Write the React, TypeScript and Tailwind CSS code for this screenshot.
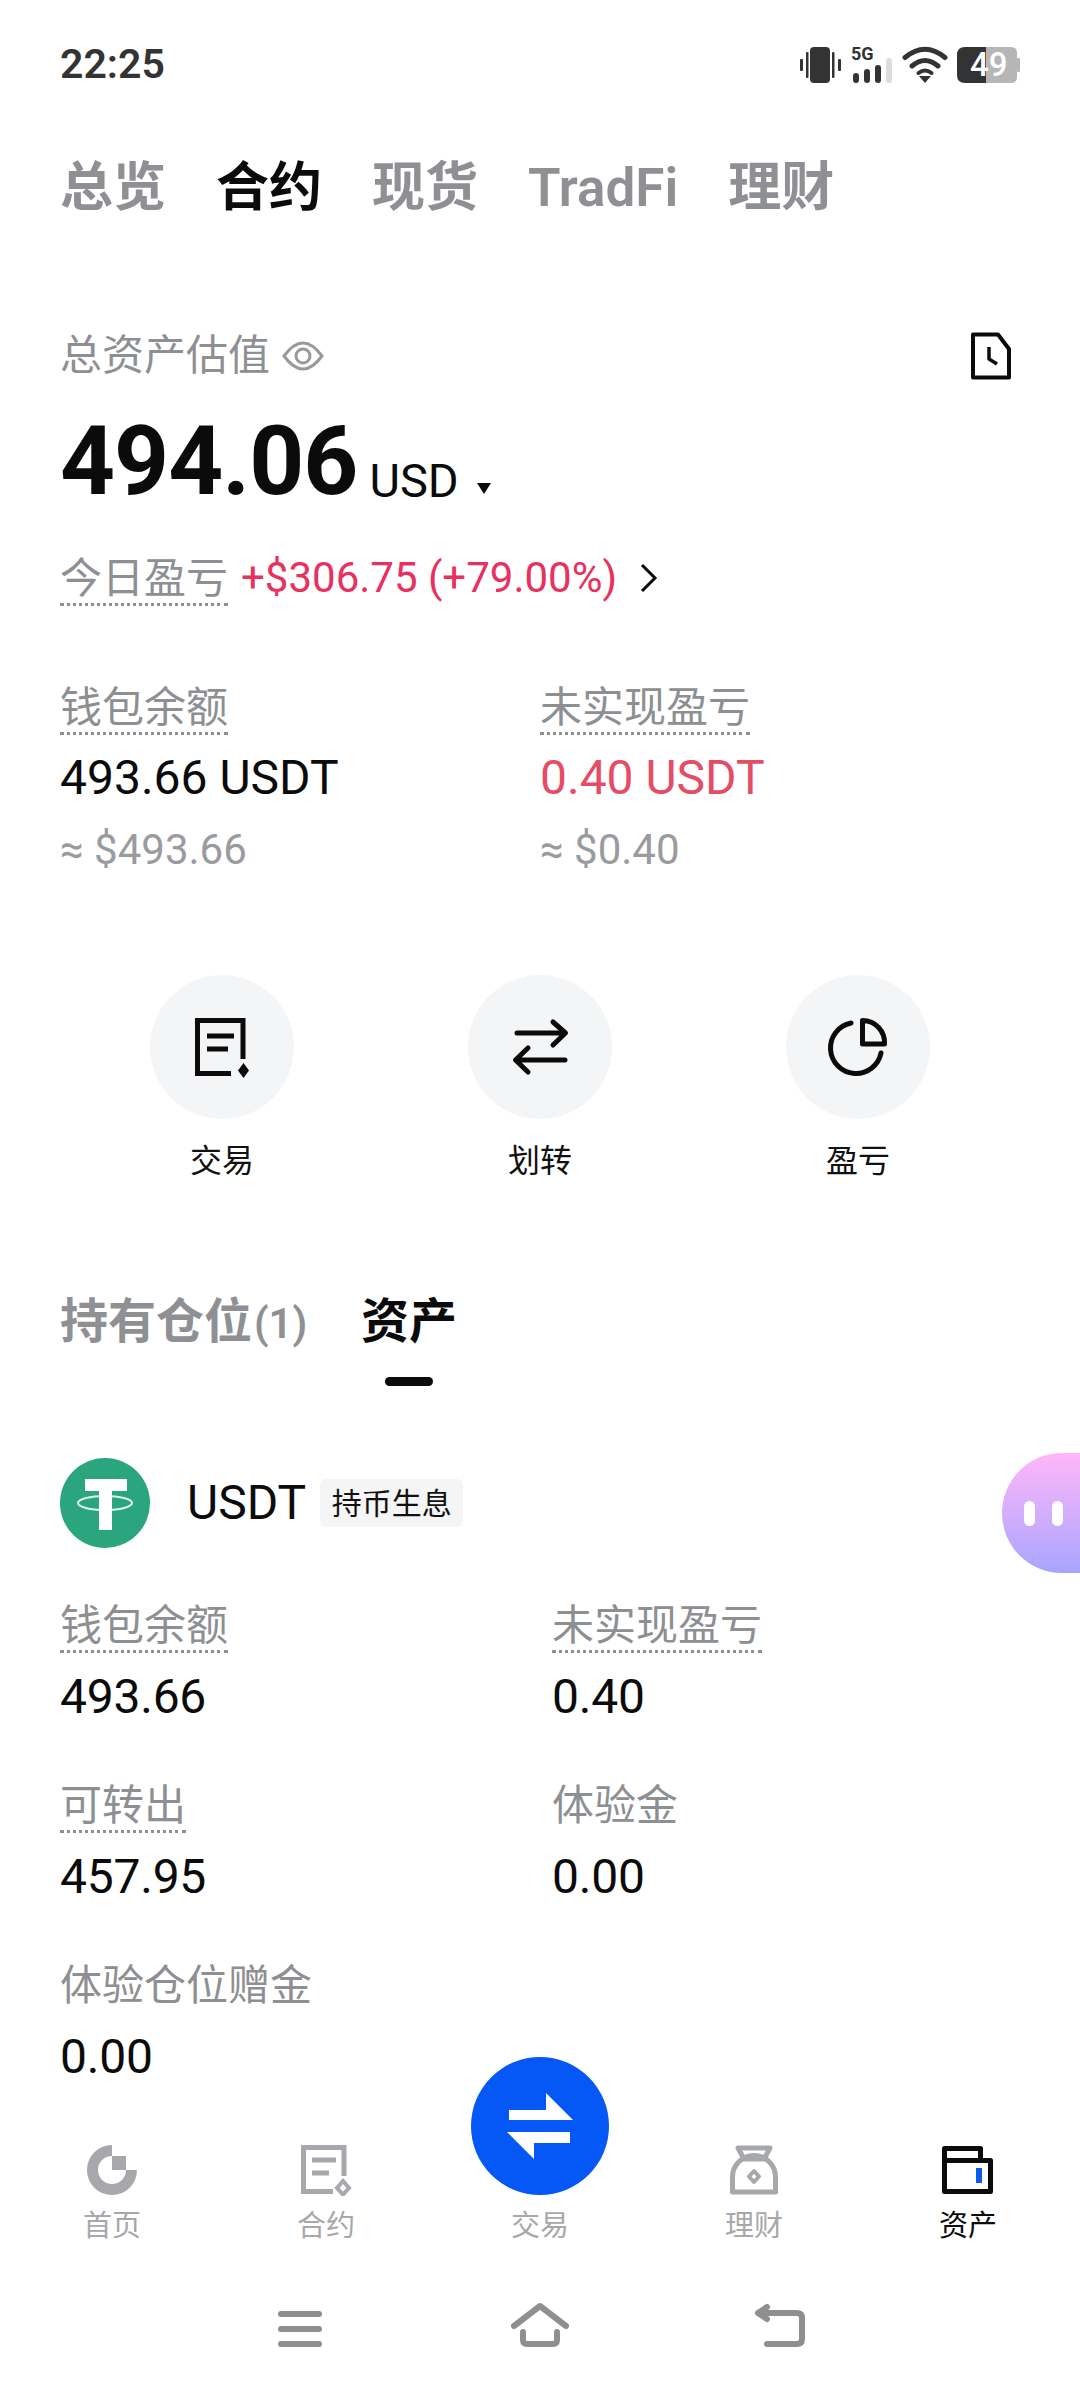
import React from 'react';

const FONT = "font-['Roboto','Noto_Sans_CJK_SC',sans-serif]";

const StatusIcons = () => (
  <svg width="230" height="50" viewBox="795 40 230 50" fill="none">
    <rect x="810" y="47" width="20" height="36" rx="4" fill="#333" />
    <rect x="800" y="59" width="3" height="12" rx="1" fill="#333" />
    <rect x="806" y="52" width="2.5" height="26" rx="1" fill="#333" />
    <rect x="832" y="52" width="2.5" height="26" rx="1" fill="#333" />
    <rect x="838" y="59" width="3" height="12" rx="1" fill="#333" />
    <text x="851" y="60" fontSize="18" fontWeight="700" fill="#333" fontFamily="Roboto">5G</text>
    <rect x="853" y="73" width="6" height="10" rx="3" fill="#333" />
    <rect x="864" y="69" width="6" height="14" rx="3" fill="#333" />
    <rect x="875" y="65" width="6" height="18" rx="3" fill="#333" />
    <rect x="886" y="58" width="6" height="25" rx="3" fill="#ddd" />
    <path d="M905 57.5Q925 41 945 57.5M912 66Q925 55 938 66" stroke="#333" strokeWidth="5" strokeLinecap="round" />
    <path d="M918.5 73Q925 68 931.5 73" stroke="#333" strokeWidth="4" strokeLinecap="round" />
    <path d="M919 76H931L925 83Z" fill="#333" />
    <path d="M986 47H1011Q1017 47 1017 53V77Q1017 83 1011 83H986Z" fill="#b6b6b6" />
    <rect x="1017" y="58" width="3" height="14" rx="1" fill="#b6b6b6" />
    <path d="M986 47H965Q957 47 957 55V75Q957 83 965 83H986Z" fill="#333" />
    <text x="970" y="76" fontSize="33" fontWeight="500" fill="#fff" fontFamily="Roboto">49</text>
  </svg>
);

const Label = ({ children }: { children: React.ReactNode }) => (
  <span className="inline-block h-[53px] border-b-[3px] border-dotted border-[#8d8f92] text-[42px] leading-[51px] text-[#8d8f92]">
    {children}
  </span>
);

const ActionIcon = ({ kind }: { kind: string }) => {
  if (kind === 'trade') {
    return (
      <svg width="60" height="66" viewBox="192 1014 60 66" fill="none" stroke="#0b0b0b" strokeWidth="5">
        <path d="M231 1073.5H197.5V1020.5H243V1059" />
        <path d="M207 1036H234M207 1049H228" />
        <path d="M243.5 1063L249 1070.5L243.5 1078L238 1070.5Z" fill="#0b0b0b" stroke="none" />
      </svg>
    );
  }
  if (kind === 'transfer') {
    return (
      <svg width="60" height="60" viewBox="510 1017 60 60" fill="none" stroke="#0b0b0b" strokeWidth="5" strokeLinecap="round" strokeLinejoin="round">
        <path d="M517 1033H565M553 1022L565.5 1033L553 1045" />
        <path d="M565 1060H517M528 1048L515.5 1060L528 1072" />
      </svg>
    );
  }
  return (
    <svg width="62" height="62" viewBox="827 1016 62 62" fill="none" stroke="#0b0b0b" strokeWidth="5" strokeLinecap="round">
      <path d="M851 1023A25.5 25.5 0 1 0 881 1053" />
      <path d="M862.5 1020.5A22 22 0 0 1 884.5 1044H862.5Z" strokeLinejoin="round" />
    </svg>
  );
};

const Stat = ({ label, value, plain }: { label: string; value: string; plain?: boolean }) => (
  <div className="flex h-[125px] flex-col items-start">
    {plain ? <span className="text-[42px] leading-[51px] text-[#8d8f92]">{label}</span> : <Label>{label}</Label>}
    <span className={`text-[48px] leading-[56px] tracking-[-0.005em] text-[#0b0b0b] ${plain ? 'mt-[18px]' : 'mt-[16px]'}`}>{value}</span>
  </div>
);

const navItems = [
  {
    label: '首页',
    icon: (
      <svg width="52" height="52" viewBox="86 2142 52 52" fill="none">
        <path d="M112 2148.5A19.5 19.5 0 1 0 131.5 2168" stroke="#a6a8ab" strokeWidth="11" />
        <rect x="112" y="2154" width="14" height="14" fill="#a6a8ab" />
      </svg>
    ),
  },
  {
    label: '合约',
    icon: (
      <svg width="52" height="52" viewBox="299 2142 52 52" fill="none" stroke="#a6a8ab" strokeWidth="5">
        <path d="M332 2189.5H302.5V2145.5H343V2174" />
        <path d="M311 2158H335M311 2171H328" />
        <path d="M342 2179L348 2186L342 2192.5L336 2186Z" strokeWidth="4" />
      </svg>
    ),
  },
  { label: '交易', icon: null },
  {
    label: '理财',
    icon: (
      <svg width="52" height="52" viewBox="727 2142 52 52" fill="none" stroke="#a6a8ab" strokeWidth="5" strokeLinejoin="round">
        <path d="M737 2146H769L763 2157H743Z" />
        <path d="M731.5 2190V2175A21.5 21.5 0 0 1 774.5 2175V2190Z" />
        <path d="M753 2169L758 2174.5L753 2180L748 2174.5Z" strokeWidth="4" />
      </svg>
    ),
  },
  {
    label: '资产',
    active: true,
    icon: (
      <svg width="54" height="52" viewBox="940 2142 54 52" fill="none" stroke="#0b0b0b" strokeWidth="5" strokeLinejoin="round">
        <path d="M943.5 2158.5H989.5V2189.5H943.5V2146.5H979.5V2158.5" />
        <rect x="975" y="2166" width="6" height="15" fill="#0b5ce6" stroke="none" />
      </svg>
    ),
  },
];

const App = () => {
  return (
    <div className={`relative flex h-[2392px] w-[1080px] flex-col overflow-hidden bg-white ${FONT}`}>
      {/* status bar */}
      <div className="flex h-[154px] items-start justify-between pl-[60px] pr-[55px] pt-[40px]">
        <span className="text-[41px] font-semibold leading-[48px] text-[#333]">22:25</span>
        <StatusIcons />
      </div>

      {/* top tabs */}
      <div className="mt-[2px] flex h-[64px] items-center gap-[50px] px-[60px] text-[53px] font-bold leading-[64px] text-[#8e9093]">
        <span>总览</span>
        <span className="text-[#0b0b0b]">合约</span>
        <span>现货</span>
        <span className="font-semibold">TradFi</span>
        <span>理财</span>
      </div>

      {/* total */}
      <div className="mt-[112px] flex h-[48px] items-center justify-between pl-[60px] pr-[68px]">
        <div className="flex items-center gap-[12px]">
          <span className="text-[42px] leading-[48px] text-[#8d8f92]">总资产估值</span>
          <svg width="42" height="34" viewBox="0 0 42 34" fill="none" stroke="#98999c" strokeWidth="3">
            <path d="M2 17Q21 -9 40 17Q21 43 2 17Z" />
            <circle cx="21" cy="17" r="7" />
          </svg>
        </div>
        <svg width="42" height="48" viewBox="0 0 42 48" fill="none" stroke="#0b0b0b" strokeWidth="4" strokeLinejoin="round">
          <path d="M3 2.5H28L39 17V45.5H3Z" />
          <path d="M19 15V27L27 32" strokeWidth="3.5" />
        </svg>
      </div>

      <div className="mt-[26px] flex h-[110px] items-baseline px-[60px] text-[#0b0b0b]">
        <span className="text-[96px] font-bold leading-[110px] tracking-[-0.01em]">494.06</span>
        <span className="ml-[12px] translate-y-[3px] text-[47px] leading-[110px]">USD</span>
        <span className="mb-[8px] ml-[18px] inline-block h-0 w-0 border-x-[7px] border-t-[11px] border-x-transparent border-t-[#0b0b0b]" />
      </div>

      <div className="mt-[37px] flex items-start px-[60px]">
        <Label>今日盈亏</Label>
        <span className="ml-[13px] text-[42px] leading-[50px] text-[#e8315f]">+$306.75 (+79.00%)</span>
        <svg className="ml-[22px] mt-[10px]" width="20" height="30" viewBox="0 0 20 30" fill="none" stroke="#0b0b0b" strokeWidth="3">
          <path d="M3 2L16 15L3 28" />
        </svg>
      </div>

      {/* balance */}
      <div className="mt-[76px] grid grid-cols-[480px_1fr] px-[60px]">
        <div className="flex flex-col items-start">
          <Label>钱包余额</Label>
          <span className="mt-[15px] text-[48px] leading-[56px] text-[#0b0b0b]">493.66 USDT</span>
          <span className="mt-[19px] text-[42px] leading-[50px] text-[#9a9b9e]">≈ $493.66</span>
        </div>
        <div className="flex flex-col items-start">
          <Label>未实现盈亏</Label>
          <span className="mt-[15px] text-[48px] leading-[56px] text-[#e54d66]">0.40 USDT</span>
          <span className="mt-[19px] text-[42px] leading-[50px] text-[#9a9b9e]">≈ $0.40</span>
        </div>
      </div>

      {/* actions */}
      <div className="mt-[100px] grid grid-cols-3 px-[63px]">
        {[
          ['trade', '交易'],
          ['transfer', '划转'],
          ['pnl', '盈亏'],
        ].map(([kind, text]) => (
          <div key={kind} className="flex flex-col items-center">
            <div className="flex h-[144px] w-[144px] items-center justify-center rounded-full bg-[#f4f5f6]">
              <ActionIcon kind={kind} />
            </div>
            <span className="mt-[22px] text-[32px] leading-[40px] text-[#111]">{text}</span>
          </div>
        ))}
      </div>

      {/* position tabs */}
      <div className="mt-[111px] flex items-start px-[60px] text-[48px] font-bold leading-[60px]">
        <span className="w-[301px] text-[#8e9093]">
          持有仓位<span className="ml-[2px] text-[42px] font-semibold">(1)</span>
        </span>
        <div className="flex flex-col items-center text-[#0b0b0b]">
          <span>资产</span>
          <span className="mt-[25px] h-[9px] w-[48px] rounded-full bg-[#0b0b0b]" />
        </div>
      </div>

      {/* coin */}
      <div className="mt-[72px] flex h-[90px] items-center px-[60px]">
        <svg width="90" height="90" viewBox="60 1458 90 90" fill="none">
          <circle cx="105" cy="1503" r="45" fill="#2aa57e" />
          <path d="M85 1479H127V1491H112V1530H99V1491H85Z" fill="#fff" />
          <ellipse cx="105" cy="1503" rx="27" ry="7" stroke="#fff" strokeWidth="2" opacity="0.85" />
        </svg>
        <span className="ml-[37px] text-[48px] leading-[56px] text-[#0b0b0b]">USDT</span>
        <span className="ml-[14px] flex h-[48px] w-[143px] items-center justify-center rounded-[6px] bg-[#f5f5f5] text-[30px] text-[#111]">
          持币生息
        </span>
      </div>

      <div className="mt-[52px] grid grid-cols-[492px_1fr] gap-y-[55px] px-[60px]">
        <Stat label="钱包余额" value="493.66" />
        <Stat label="未实现盈亏" value="0.40" />
        <Stat label="可转出" value="457.95" />
        <Stat label="体验金" value="0.00" plain />
        <Stat label="体验仓位赠金" value="0.00" plain />
      </div>

      {/* floating assistant */}
      <div className="absolute right-0 top-[1453px] flex h-[120px] w-[78px] items-center gap-[17px] rounded-l-full bg-gradient-to-b from-[#ffb6f8] to-[#a8a4ff] pl-[22px]">
        <span className="h-[25px] w-[11px] rounded-full bg-white" />
        <span className="h-[25px] w-[11px] rounded-full bg-white" />
      </div>

      {/* bottom nav */}
      <div className="mt-auto grid grid-cols-5 px-[5px]">
        {navItems.map((item) => (
          <div key={item.label} className="flex flex-col items-center">
            {item.icon ? (
              <div className="flex h-[50px] items-center justify-center">{item.icon}</div>
            ) : (
              <div className="-mt-[88px] flex h-[138px] w-[138px] items-center justify-center rounded-full bg-[#0558f5]">
                <svg width="70" height="70" viewBox="504 2091 70 70" fill="#fff">
                  <path d="M508 2110H545V2093L572 2120H508Z" />
                  <path d="M569 2143H533V2159L506 2132H569Z" />
                </svg>
              </div>
            )}
            <span className={`mt-[15px] text-[29px] leading-[32px] ${item.active ? 'text-[#0b0b0b]' : 'text-[#a6a8ab]'}`}>
              {item.label}
            </span>
          </div>
        ))}
      </div>

      {/* system bar */}
      <div className="mt-[58px] mb-[42px] flex h-[50px] items-center justify-center gap-[180px]">
        <svg width="60" height="50" viewBox="270 2300 60 50" fill="none" stroke="#8f8f8f" strokeWidth="6" strokeLinecap="round">
          <path d="M281 2314H319M281 2329H319M281 2344H319" />
        </svg>
        <svg width="60" height="50" viewBox="510 2300 60 50" fill="none" stroke="#8f8f8f" strokeWidth="6" strokeLinecap="round" strokeLinejoin="round">
          <path d="M514 2326L540 2306L566 2326" />
          <path d="M523 2332V2340Q523 2344 527 2344H553Q557 2344 557 2340V2332" />
        </svg>
        <svg width="60" height="50" viewBox="750 2300 60 50" fill="none" stroke="#8f8f8f" strokeWidth="6" strokeLinecap="round" strokeLinejoin="round">
          <path d="M767 2307L758 2313L767 2319" />
          <path d="M759 2313H797Q802 2313 802 2318V2339Q802 2344 797 2344H767" />
        </svg>
      </div>
    </div>
  );
};

export default App;
